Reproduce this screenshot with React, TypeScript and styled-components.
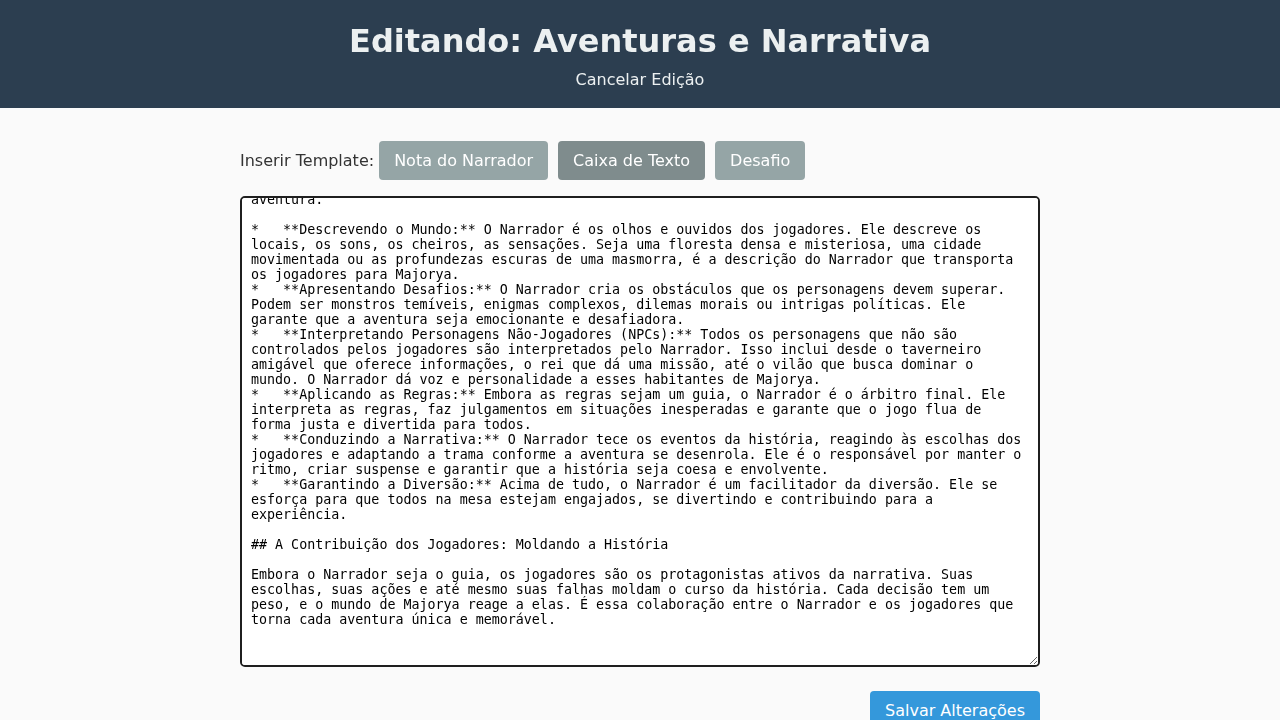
import { useLayoutEffect, useRef } from "react";
import styled, { createGlobalStyle } from "styled-components";

const GlobalStyle = createGlobalStyle`
  html, body {
    margin: 0;
    padding: 0;
    background-color: #fafafa;
    font-family: "DejaVu Sans", "Noto Sans", sans-serif;
    color: #333333;
  }
`;

const Header = styled.header`
  background-color: #2c3e50;
  color: #ecf0f1;
  text-align: center;
  padding: 23px 0 18px;
  height: 108px;
  box-sizing: border-box;

  h1 {
    margin: 0 0 10px;
    font-size: 32px;
    font-weight: bold;
    line-height: 37px;
  }
`;

const CancelLink = styled.a`
  color: #ecf0f1;
  font-size: 16px;
  text-decoration: none;
  cursor: pointer;
`;

const Main = styled.main`
  width: 800px;
  margin: 0 auto;
  padding-top: 33px;
`;

const Toolbar = styled.div`
  display: flex;
  align-items: center;
  margin-bottom: 16px;

  span {
    font-size: 16px;
    color: #333333;
  }
`;

const TemplateButton = styled.button<{ $active?: boolean }>`
  margin: 0 5px;
  height: 39px;
  padding: 0 15px;
  border: none;
  border-radius: 4px;
  background-color: ${(p) => (p.$active ? "#7f8c8d" : "#95a5a6")};
  color: #ffffff;
  font-family: "DejaVu Sans", sans-serif;
  font-size: 16px;
  cursor: pointer;
`;

const Editor = styled.textarea`
  display: block;
  width: 800px;
  height: 471px;
  box-sizing: border-box;
  padding: 10px 10px 8px 9px;
  border: 2px solid #1f1f1f;
  border-radius: 5px;
  background-color: #ffffff;
  color: #000000;
  font-family: "DejaVu Sans Mono", monospace;
  font-size: 13.3333px;
  outline: none;
`;

const Actions = styled.div`
  display: flex;
  justify-content: flex-end;
  margin-top: 24px;
`;

const SaveButton = styled.button`
  padding: 10px 15px;
  border: none;
  border-radius: 4px;
  background-color: #3498db;
  color: #ffffff;
  font-family: "DejaVu Sans", sans-serif;
  font-size: 16px;
  cursor: pointer;
`;

const content = `# Aventuras e Narrativa

## O Papel do Narrador

Em Majorya, toda sessão de jogo gira em torno de uma história compartilhada. O Narrador, também chamado de Mestre, é quem dá vida a essa história e conduz os jogadores ao longo de cada
aventura.

*   **Descrevendo o Mundo:** O Narrador é os olhos e ouvidos dos jogadores. Ele descreve os locais, os sons, os cheiros, as sensações. Seja uma floresta densa e misteriosa, uma cidade movimentada ou as profundezas escuras de uma masmorra, é a descrição do Narrador que transporta os jogadores para Majorya.
*   **Apresentando Desafios:** O Narrador cria os obstáculos que os personagens devem superar. Podem ser monstros temíveis, enigmas complexos, dilemas morais ou intrigas políticas. Ele garante que a aventura seja emocionante e desafiadora.
*   **Interpretando Personagens Não-Jogadores (NPCs):** Todos os personagens que não são controlados pelos jogadores são interpretados pelo Narrador. Isso inclui desde o taverneiro amigável que oferece informações, o rei que dá uma missão, até o vilão que busca dominar o mundo. O Narrador dá voz e personalidade a esses habitantes de Majorya.
*   **Aplicando as Regras:** Embora as regras sejam um guia, o Narrador é o árbitro final. Ele interpreta as regras, faz julgamentos em situações inesperadas e garante que o jogo flua de forma justa e divertida para todos.
*   **Conduzindo a Narrativa:** O Narrador tece os eventos da história, reagindo às escolhas dos jogadores e adaptando a trama conforme a aventura se desenrola. Ele é o responsável por manter o ritmo, criar suspense e garantir que a história seja coesa e envolvente.
*   **Garantindo a Diversão:** Acima de tudo, o Narrador é um facilitador da diversão. Ele se esforça para que todos na mesa estejam engajados, se divertindo e contribuindo para a experiência.

## A Contribuição dos Jogadores: Moldando a História

Embora o Narrador seja o guia, os jogadores são os protagonistas ativos da narrativa. Suas escolhas, suas ações e até mesmo suas falhas moldam o curso da história. Cada decisão tem um peso, e o mundo de Majorya reage a elas. É essa colaboração entre o Narrador e os jogadores que torna cada aventura única e memorável.

`;

export default function App() {
  const editorRef = useRef<HTMLTextAreaElement>(null);

  // editor sits scrolled to the end, like after typing
  useLayoutEffect(() => {
    const el = editorRef.current;
    if (!el) return;
    el.scrollTop = el.scrollHeight;
    const id = requestAnimationFrame(() => {
      el.scrollTop = el.scrollHeight;
    });
    return () => cancelAnimationFrame(id);
  }, []);

  return (
    <>
      <GlobalStyle />
      <Header>
        <h1>Editando: Aventuras e Narrativa</h1>
        <CancelLink>Cancelar Edição</CancelLink>
      </Header>
      <Main>
        <Toolbar>
          <span>Inserir Template:</span>
          <TemplateButton>Nota do Narrador</TemplateButton>
          <TemplateButton $active>Caixa de Texto</TemplateButton>
          <TemplateButton>Desafio</TemplateButton>
        </Toolbar>
        <Editor ref={editorRef} defaultValue={content} spellCheck={false} />
        <Actions>
          <SaveButton>Salvar Alterações</SaveButton>
        </Actions>
      </Main>
    </>
  );
}
